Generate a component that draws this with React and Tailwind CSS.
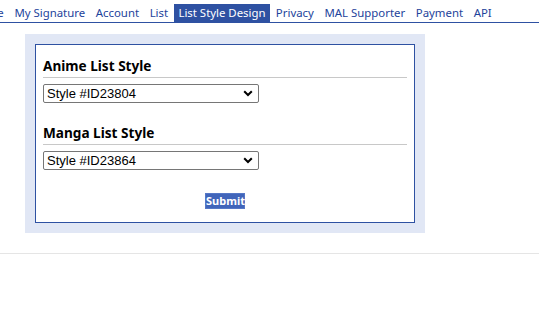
import React from "react";

const navItems = ["Profile", "My Signature", "Account", "List", "List Style Design", "Privacy", "MAL Supporter", "Payment", "API"];

function Select({ value }) {
  return (
    <div className="relative mt-[6px] w-[216px] h-[19px] border border-[#767676] rounded-[2px] bg-white flex items-center">
      <span className="pl-[3px] text-[13px] leading-[17px] text-black" style={{ fontFamily: '"Liberation Sans", Arial, sans-serif' }}>{value}</span>
      <svg className="absolute right-[5px] top-[5px]" width="10" height="7" viewBox="0 0 10 7">
        <path d="M1.2 1.2 L5 5 L8.8 1.2" fill="none" stroke="#000" strokeWidth="2" />
      </svg>
    </div>
  );
}

export default function App() {
  return (
    <div className="w-[539px] h-[319px] bg-white overflow-hidden" style={{ fontFamily: '"Noto Sans", Tahoma, sans-serif' }}>
      <div className="h-[23px] border-b border-[#2e51a2] flex items-end overflow-hidden">
        <div className="flex items-end -ml-[36px] whitespace-nowrap">
          {navItems.map((it) => (
            it === "List Style Design" ? (
              <span key={it} className="bg-[#2e51a2] text-white text-[11.4px] leading-[18px] px-[4px] mx-[1px]">{it}</span>
            ) : (
              <span key={it} className="text-[#1d439b] text-[11.4px] leading-[18px] px-[5.3px]">{it}</span>
            )
          ))}
        </div>
      </div>
      <div className="ml-[25px] mt-[11px] w-[400px] bg-[#e1e7f5] p-[10px]">
        <div className="border border-[#2e51a2] bg-white px-[7px] pt-[13px] pb-[13px]">
          <div className="border-b border-[#c8c8c8] pb-[3px]">
            <div className="text-[13.6px] leading-[16px] font-bold text-black">Anime List Style</div>
          </div>
          <Select value="Style #ID23804" />
          <div className="mt-[22px] border-b border-[#c8c8c8] pb-[3px]">
            <div className="text-[13.6px] leading-[16px] font-bold text-black">Manga List Style</div>
          </div>
          <Select value="Style #ID23864" />
          <div className="mt-[23px] flex justify-center">
            <button className="h-[16px] w-[40px] bg-[#4165ba] border border-[#5577c6] text-white text-[11px] leading-[14px] font-bold">Submit</button>
          </div>
        </div>
      </div>
      <div className="mt-[20px] border-b border-[#e5e5e5]"></div>
    </div>
  );
}
